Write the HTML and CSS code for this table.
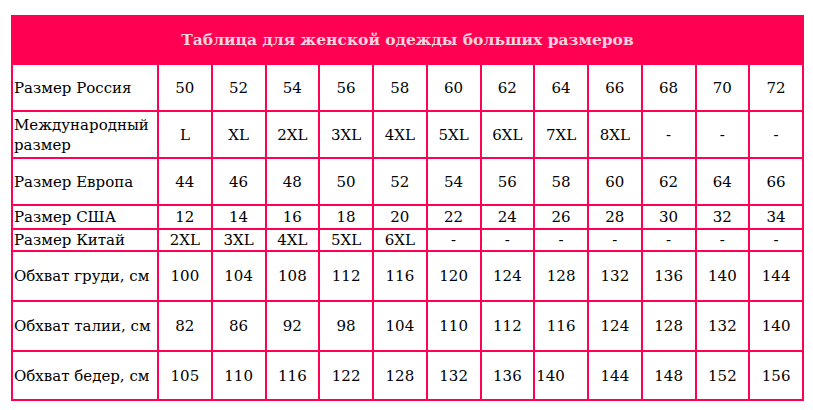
FILE: index.html
```html
<!DOCTYPE html>
<html lang="ru">
<head>
<meta charset="utf-8">
<link rel="stylesheet" href="styles.css">
</head>
<body>
<div class="page">
<table class="sizes">
<colgroup>
<col class="c-label">
<col span="12" class="c-val">
</colgroup>
<thead>
<tr class="r-head"><th colspan="13">Таблица для женской одежды больших размеров</th></tr>
</thead>
<tbody>
<tr class="r-47"><td class="lbl">Размер Россия</td><td>50</td><td>52</td><td>54</td><td>56</td><td>58</td><td>60</td><td>62</td><td>64</td><td>66</td><td>68</td><td>70</td><td>72</td></tr>
<tr class="r-47"><td class="lbl">Международный размер</td><td>L</td><td>XL</td><td>2XL</td><td>3XL</td><td>4XL</td><td>5XL</td><td>6XL</td><td>7XL</td><td>8XL</td><td>-</td><td>-</td><td>-</td></tr>
<tr class="r-47"><td class="lbl">Размер Европа</td><td>44</td><td>46</td><td>48</td><td>50</td><td>52</td><td>54</td><td>56</td><td>58</td><td>60</td><td>62</td><td>64</td><td>66</td></tr>
<tr class="r-24"><td class="lbl">Размер США</td><td>12</td><td>14</td><td>16</td><td>18</td><td>20</td><td>22</td><td>24</td><td>26</td><td>28</td><td>30</td><td>32</td><td>34</td></tr>
<tr class="r-22"><td class="lbl">Размер Китай</td><td>2XL</td><td>3XL</td><td>4XL</td><td>5XL</td><td>6XL</td><td>-</td><td>-</td><td>-</td><td>-</td><td>-</td><td>-</td><td>-</td></tr>
<tr class="r-50"><td class="lbl">Обхват груди, см</td><td>100</td><td>104</td><td>108</td><td>112</td><td>116</td><td>120</td><td>124</td><td>128</td><td>132</td><td>136</td><td>140</td><td>144</td></tr>
<tr class="r-50"><td class="lbl">Обхват талии, см</td><td>82</td><td>86</td><td>92</td><td>98</td><td>104</td><td>110</td><td>112</td><td>116</td><td>124</td><td>128</td><td>132</td><td>140</td></tr>
<tr class="r-49"><td class="lbl">Обхват бедер, см</td><td>105</td><td>110</td><td>116</td><td>122</td><td>128</td><td>132</td><td>136</td><td class="left">140</td><td>144</td><td>148</td><td>152</td><td>156</td></tr>
</tbody>
</table>
</div>
</body>
</html>
```

FILE: styles.css
```css
html, body {
  margin: 0;
  padding: 0;
  background: #ffffff;
}
.page {
  padding: 15px 0 0 11px;
}
.sizes {
  border-collapse: collapse;
  table-layout: fixed;
  width: 793px;
  font-family: "DejaVu Serif", "Liberation Serif", serif;
  font-size: 15px;
  color: #000;
}
.c-label { width: 146px; }
.sizes td, .sizes th {
  border: 2px solid #ff0052;
  padding: 0;
  line-height: 20px;
  text-align: center;
  vertical-align: middle;
}
.sizes th {
  background: #ff0052;
  color: #fad3de;
  font-size: 15.5px;
  font-weight: bold;
  height: 46px;
}
.sizes td.lbl {
  text-align: left;
  padding-left: 1px;
}
.sizes td.left {
  text-align: left;
  padding-left: 1px;
}
.r-47 td { height: 45px; }
.r-24 td { height: 22px; }
.r-22 td { height: 20px; }
.r-50 td { height: 48px; }
.r-49 td { height: 47px; }
```
